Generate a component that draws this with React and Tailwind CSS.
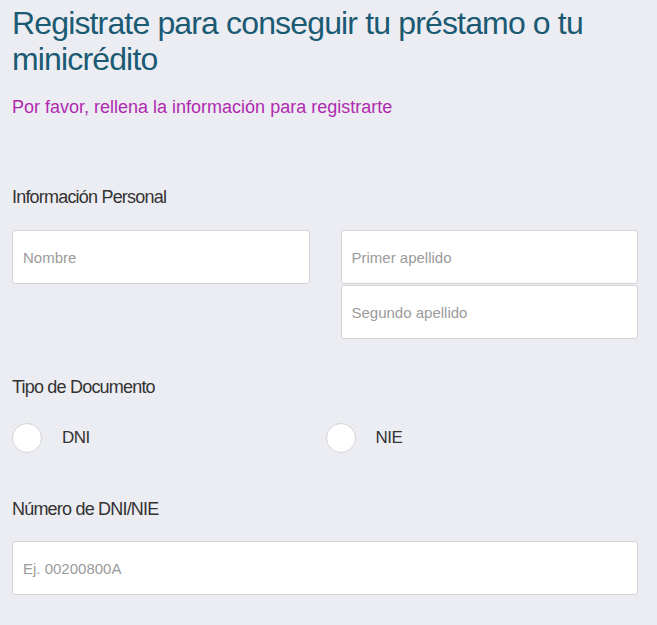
const inputClass =
  'h-[54px] w-full rounded-[3px] border border-[#d4d4d6] bg-white px-[10px] text-[15px] text-[#333] placeholder:text-[#9b9b9b] outline-none';

export default function App() {
  return (
    <div
      className="min-h-[625px] w-full bg-[#ecedf2] pl-3 pr-[19px] pt-[5px]"
      style={{ fontFamily: '"Liberation Sans", Arial, sans-serif' }}>
      <h1 className="text-[32px] leading-[36px] font-normal tracking-[-0.85px] text-[#1a5a73]">
        Registrate para conseguir tu préstamo o tu minicrédito
      </h1>
      <p className="mt-[18px] text-[18px] leading-6 text-[#b02ab0]">
        Por favor, rellena la información para registrarte
      </p>

      <h2 className="mt-[66px] text-[18px] leading-6 tracking-[-0.8px] text-[#333333]">
        Información Personal
      </h2>
      <div className="mt-[21px] grid grid-cols-2 gap-x-[31px]">
        <input type="text" placeholder="Nombre" className={inputClass} />
        <div className="flex flex-col gap-[1px]">
          <input type="text" placeholder="Primer apellido" className={inputClass} />
          <input type="text" placeholder="Segundo apellido" className={inputClass} />
        </div>
      </div>

      <h2 className="mt-[36px] text-[18px] leading-6 tracking-[-0.8px] text-[#333333]">
        Tipo de Documento
      </h2>
      <div className="mt-[24px] grid grid-cols-2 gap-x-[31px]">
        <label className="flex items-center gap-[20px]">
          <span className="h-[30px] w-[30px] rounded-full border border-[#d4d4d6] bg-white" />
          <span className="text-[17px] tracking-[-0.5px] text-[#333333]">DNI</span>
        </label>
        <label className="-ml-[15px] flex items-center gap-[20px]">
          <span className="h-[30px] w-[30px] rounded-full border border-[#d4d4d6] bg-white" />
          <span className="text-[17px] tracking-[-0.5px] text-[#333333]">NIE</span>
        </label>
      </div>

      <h2 className="mt-[44px] text-[18px] leading-6 tracking-[-0.8px] text-[#333333]">
        Número de DNI/NIE
      </h2>
      <input type="text" placeholder="Ej. 00200800A" className={`mt-[20px] ${inputClass}`} />
    </div>
  );
}
